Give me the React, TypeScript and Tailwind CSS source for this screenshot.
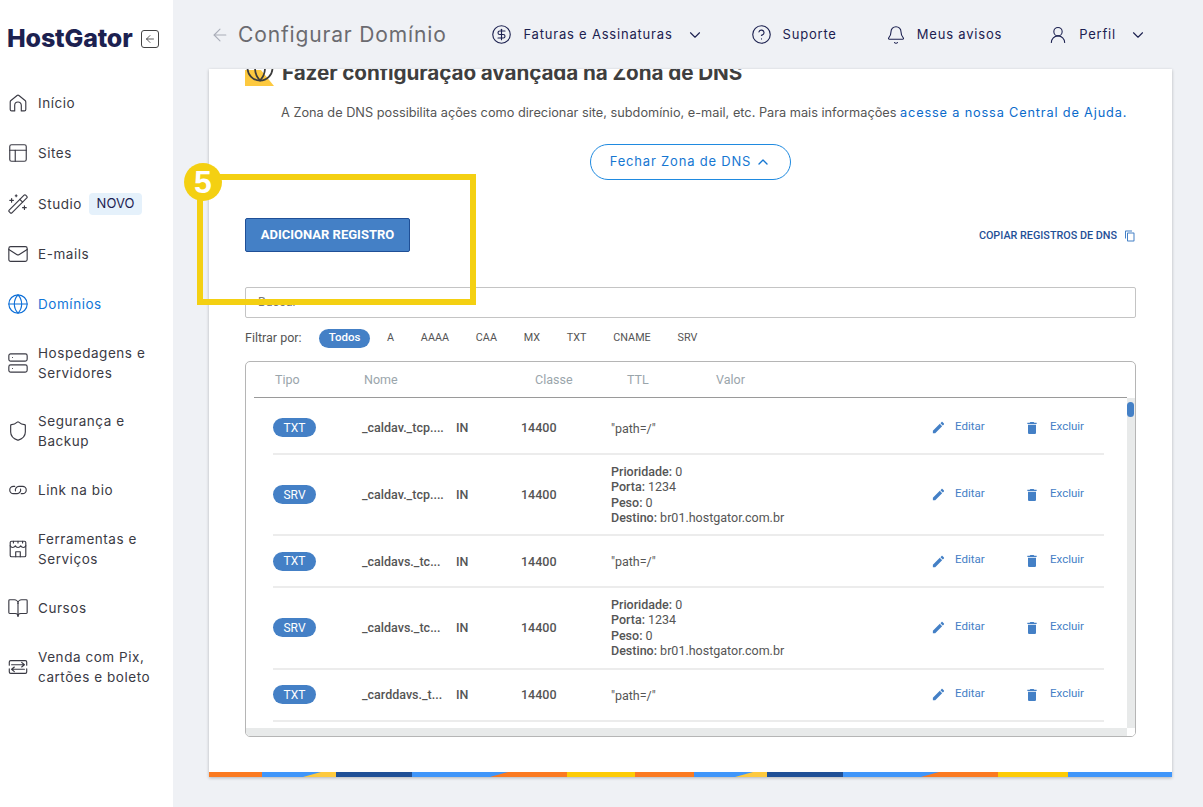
import type { ReactNode } from 'react';
import {
  ArrowLeft,
  Bell,
  BookOpen,
  ChevronDown,
  ChevronUp,
  CircleDollarSign,
  CircleHelp,
  Globe,
  Layout,
  Mail,
  Server,
  Shield,
  UserRound,
  WandSparkles,
} from 'lucide-react';

type IconProps = { size?: number; strokeWidth?: number; color?: string; className?: string };

function Outline({ size, strokeWidth, color, className, children }: IconProps & { children: ReactNode }) {
  return (
    <svg
      width={size}
      height={size}
      viewBox="0 0 24 24"
      fill="none"
      stroke={color}
      strokeWidth={strokeWidth}
      strokeLinecap="round"
      strokeLinejoin="round"
      className={className}
    >
      {children}
    </svg>
  );
}

function HouseIcon(props: IconProps) {
  return (
    <Outline {...props}>
      <path d="M3.500 19V10.800c0-.6.3-1.200.8-1.600L11 3.800c.6-.4 1.400-.4 2 0l6.700 5.400c.5.4.8 1 .8 1.600V19c0 1-.7 1.600-1.600 1.600h-3.300V14.500a3.600 3.600 0 0 0-7.200 0v6.100H5.100C4.200 20.600 3.500 20 3.500 19z" />
    </Outline>
  );
}

function ChainIcon(props: IconProps) {
  return (
    <Outline {...props}>
      <path d="M8.500 8H7a4 4 0 0 0 0 8h4a4 4 0 0 0 3.800-5" />
      <path d="M15.500 16H17a4 4 0 0 0 0-8h-4a4 4 0 0 0-3.800 5" />
    </Outline>
  );
}

function ShopIcon(props: IconProps) {
  return (
    <Outline {...props}>
      <rect x="3.500" y="3.500" width="17" height="17" rx="1.500" />
      <path d="M3.500 8.500c1 2.500 4.200 2.500 5.600 0 1 2.500 4.800 2.500 5.800 0 1.400 2.500 4.600 2.500 5.600 0" />
      <path d="M9.500 20.500V15h5v5.500" />
      <path d="M7 3.500v2M12 3.500v2M17 3.500v2" />
    </Outline>
  );
}

function PixIcon(props: IconProps) {
  return (
    <Outline {...props}>
      <path d="M2.500 10V6.500c0-.8.7-1.500 1.500-1.500h16c.8 0 1.500.7 1.500 1.500V10" />
      <path d="M2.500 14v3.500c0 .8.700 1.500 1.500 1.500h16c.8 0 1.500-.7 1.500-1.500V14" />
      <path d="M5 9.500h14M16 7l3 2.500L16 12" />
      <path d="M19 14.500H5M8 12l-3 2.500L8 17" />
    </Outline>
  );
}

const navItems = [
  { label: ['Início'], icon: HouseIcon, h: 'h-[50px]' },
  { label: ['Sites'], icon: Layout, h: 'h-[50px]' },
  { label: ['Studio'], icon: WandSparkles, h: 'h-[51px]', badge: true },
  { label: ['E-mails'], icon: Mail, h: 'h-[50px]' },
  { label: ['Domínios'], icon: Globe, h: 'h-[50px]', active: true },
  { label: ['Hospedagens e', 'Servidores'], icon: Server, h: 'h-[68px]' },
  { label: ['Segurança e', 'Backup'], icon: Shield, h: 'h-[68px]' },
  { label: ['Link na bio'], icon: ChainIcon, h: 'h-[50px]' },
  { label: ['Ferramentas e', 'Serviços'], icon: ShopIcon, h: 'h-[68px]' },
  { label: ['Cursos'], icon: BookOpen, h: 'h-[50px]' },
  { label: ['Venda com Pix,', 'cartões e boleto'], icon: PixIcon, h: 'h-[68px]' },
];

const srv = ['Prioridade: 0', 'Porta: 1234', 'Peso: 0', 'Destino: br01.hostgator.com.br'];

const rows = [
  { type: 'TXT', name: '_caldav._tcp....', h: 'h-[57px] pt-[4px]' },
  { type: 'SRV', name: '_caldav._tcp....', h: 'h-[81px]', srv: true },
  { type: 'TXT', name: '_caldavs._tc...', h: 'h-[52px]' },
  { type: 'SRV', name: '_caldavs._tc...', h: 'h-[82px] pb-[1px]', srv: true },
  { type: 'TXT', name: '_carddavs._t...', h: 'h-[52px] pb-[1px]' },
];

const filters = ['A', 'AAAA', 'CAA', 'MX', 'TXT', 'CNAME', 'SRV'];

function TopItem({ icon, children }: { icon: ReactNode; children: ReactNode }) {
  return (
    <div className="flex items-center gap-[11px] text-[13px] tracking-[0.8px] text-[#1c2150]">
      {icon}
      <span>{children}</span>
    </div>
  );
}

function Sidebar() {
  return (
    <aside className="w-[173px] shrink-0 bg-white">
      <div className="flex h-[78px] items-center pl-[7px]">
        <span className="text-[25px] font-extrabold tracking-[-0.15px] text-[#1c2150]">HostGator</span>
        <span className="ml-[8px] flex h-[18px] w-[18px] items-center justify-center rounded-[3px] border border-[#444]">
          <ArrowLeft size={12} strokeWidth={1.6} color="#333" />
        </span>
      </div>
      <nav className="pl-[7px]">
        {navItems.map((item) => {
          const Icon = item.icon;
          return (
            <div key={item.label[0]} className={`flex items-center gap-[9px] ${item.h}`}>
              <Icon size={22} strokeWidth={1.25} color={item.active ? '#0d6fd8' : '#3a3a44'} className="shrink-0" />
              <div className={`text-[13.5px] leading-[20px] tracking-[0.55px] ${item.active ? 'text-[#1276d8]' : 'text-[#3a3a44]'}`}>
                {item.label.map((l) => (
                  <div key={l} className="whitespace-nowrap">{l}</div>
                ))}
              </div>
              {item.badge && (
                <span className="-ml-[2px] flex h-[22px] w-[53px] items-center justify-center rounded-[4px] bg-[#e5f1fb] text-[13px] text-[#1c2150]">NOVO</span>
              )}
            </div>
          );
        })}
      </nav>
    </aside>
  );
}

function Header() {
  return (
    <header className="flex h-[69px] shrink-0 items-center pl-[37px] pr-[56px]">
      <ArrowLeft size={20} strokeWidth={1.3} color="#a9adb8" />
      <h1 className="ml-[8px] text-[21px] tracking-[0.85px] text-[#6b6b70]">Configurar Domínio</h1>
      <div className="ml-auto flex items-center">
        <TopItem icon={<CircleDollarSign size={21} strokeWidth={1.3} />}>Faturas e Assinaturas</TopItem>
        <ChevronDown size={18} strokeWidth={1.5} color="#1c2150" className="ml-[13px]" />
        <div className="ml-[47px]">
          <TopItem icon={<CircleHelp size={21} strokeWidth={1.3} />}>Suporte</TopItem>
        </div>
        <div className="ml-[49px]">
          <TopItem icon={<Bell size={20} strokeWidth={1.3} />}>Meus avisos</TopItem>
        </div>
        <div className="ml-[46px]">
          <TopItem icon={<UserRound size={20} strokeWidth={1.3} />}>Perfil</TopItem>
        </div>
        <ChevronDown size={18} strokeWidth={1.5} color="#1c2150" className="ml-[13px]" />
      </div>
    </header>
  );
}

function TableRow({ row }: { row: (typeof rows)[number] }) {
  return (
    <div className={`flex items-center border-b-2 border-[#ececec] font-['Roboto',sans-serif] text-[12.5px] font-medium text-[#555] ${row.h}`}>
      <span className="flex h-[19px] w-[43px] items-center justify-center rounded-full bg-[#4480c6] text-[12px] font-normal text-white">
        {row.type}
      </span>
      <span className="ml-[46px] w-[94px] translate-y-[1px] whitespace-nowrap">{row.name}</span>
      <span className="w-[65px] translate-y-[1px]">IN</span>
      <span className="w-[90px] translate-y-[1px]">14400</span>
      <div className="w-[320px] font-normal leading-[15.3px]">
        {row.srv ? (
          srv.map((line) => {
            const [k, v] = line.split(': ');
            return (
              <div key={line}>
                <span className="font-medium">{k}:</span> {v}
              </div>
            );
          })
        ) : (
          <span className="inline-block translate-y-[1px] font-normal">"path=/"</span>
        )}
      </div>
      <svg width="15" height="15" viewBox="0 0 24 24" fill="#4480c6">
        <path d="M3 17.25V21h3.75L17.81 9.94l-3.75-3.75L3 17.25zM20.71 7.04c.39-.39.39-1.02 0-1.41l-2.34-2.34c-.39-.39-1.02-.39-1.41 0l-1.83 1.83 3.75 3.75 1.83-1.83z" />
      </svg>
      <span className="ml-[9px] w-[69px] -translate-y-[1px] text-[11.5px] font-normal text-[#4480c6]">Editar</span>
      <svg width="16" height="16" viewBox="0 0 24 24" fill="#4480c6">
        <path d="M6 19c0 1.1.9 2 2 2h8c1.1 0 2-.9 2-2V7H6v12zM19 4h-3.5l-1-1h-5l-1 1H5v2h14V4z" />
      </svg>
      <span className="ml-[10px] -translate-y-[1px] text-[11.5px] font-normal text-[#4480c6]">Excluir</span>
    </div>
  );
}

function DnsTable() {
  return (
    <div className="mt-[13px] h-[376px] overflow-hidden rounded-[5px] border border-[#b5b5b5] font-['Roboto',sans-serif]">
      <div className="mx-[8px] flex h-[36px] items-center border-b border-[#9a9a9a] pl-[21px] pt-[2px] text-[12.5px] text-[#9aa5ab]">
        <span className="w-[89px]">Tipo</span>
        <span className="w-[171px]">Nome</span>
        <span className="w-[92px]">Classe</span>
        <span className="w-[89px]">TTL</span>
        <span>Valor</span>
      </div>
      <div className="flex h-[330px]">
        <div className="flex-1 overflow-hidden pl-[27px] pr-[23px]">
          {rows.map((row, i) => (
            <TableRow key={i} row={row} />
          ))}
        </div>
        <div className="relative w-[8px] shrink-0 bg-[#e8eaea]">
          <div className="absolute left-0 top-[4px] h-[15px] w-[7px] rounded-full bg-[#4480c6]" />
        </div>
      </div>
      <div className="flex h-[8px]">
        <div className="flex-1 bg-[#e8eaea]" />
        <div className="w-[8px] bg-white" />
      </div>
    </div>
  );
}

function Stripe() {
  return (
    <svg className="block h-[5px] w-full shrink-0" viewBox="0 0 963 5" preserveAspectRatio="none">
      <rect width="963" height="5" fill="#4096fa" />
      <rect width="53" height="5" fill="#fb7a20" />
      <polygon points="94,5 112,0 127,0 127,5" fill="#fdc93f" />
      <rect x="127" width="76" height="5" fill="#1f5097" />
      <polygon points="281,5 299,0 358,0 358,5" fill="#fb7a20" />
      <rect x="358" width="68" height="5" fill="#fdcb06" />
      <rect x="426" width="59" height="5" fill="#fb7a20" />
      <polygon points="526,5 544,0 558,0 558,5" fill="#fdc93f" />
      <rect x="558" width="76" height="5" fill="#1f5097" />
      <polygon points="712,5 730,0 789,0 789,5" fill="#fb7a20" />
      <rect x="789" width="70" height="5" fill="#fdcb06" />
    </svg>
  );
}

function Card() {
  return (
    <section className="flex h-[708px] flex-col overflow-hidden bg-white shadow-[0_1px_3px_rgba(0,0,0,0.25)]">
      <div className="h-[703px] flex-1 px-[36px]">
        <div className="-mt-[10px] flex h-[27px] items-center">
          <div className="relative mr-[8px] h-[27px] w-[29px]">
            <div className="absolute bottom-0 left-0 h-[16px] w-[29px] bg-[#fdc93f] [clip-path:polygon(0_0,55%_0,100%_100%,0_100%)]" />
            <Globe size={30} strokeWidth={1.4} color="#3d3d3d" className="absolute left-[0px] top-[-6px]" />
          </div>
          <h2 className="whitespace-nowrap text-[20.7px] font-bold tracking-[-0.1px] text-[#3f3f3f]">Fazer configuração avançada na Zona de DNS</h2>
        </div>
        <p className="mt-[17px] whitespace-nowrap pl-[36px] text-[12.75px] leading-[20px] text-[#555]">
          A Zona de DNS possibilita ações como direcionar site, subdomínio, e-mail, etc. Para mais informações{' '}
          <span className="tracking-[0.83px] text-[#0b6bcb]">acesse a nossa Central de Ajuda</span>
          <span className="text-[#0b6bcb]">.</span>
        </p>
        <div className="mt-[21px] flex justify-center">
          <button className="flex h-[36px] w-[201px] items-center justify-center gap-[4px] rounded-full border border-[#1f8ae0] text-[13px] tracking-[0.8px] text-[#1677d2]">
            Fechar Zona de DNS
            <ChevronUp size={16} strokeWidth={2} />
          </button>
        </div>
        <div className="mt-[38px] flex items-center justify-between font-['Roboto',sans-serif]">
          <button className="h-[34px] w-[165px] rounded-[2px] border border-[#1f4f96] bg-[#4480c6] text-[13px] font-bold text-white">
            ADICIONAR REGISTRO
          </button>
          <div className="flex translate-y-[1px] items-center gap-[7px] text-[10.8px] font-medium text-[#1f5097]">
            COPIAR REGISTROS DE DNS
            <svg width="12" height="12" viewBox="0 0 24 24" fill="#4480c6">
              <path d="M16 1H4c-1.1 0-2 .9-2 2v14h2V3h12V1zm3 4H8c-1.1 0-2 .9-2 2v14c0 1.1.9 2 2 2h11c1.1 0 2-.9 2-2V7c0-1.1-.9-2-2-2zm0 16H8V7h11v14z" />
            </svg>
          </div>
        </div>
        <div className="mt-[35px] flex h-[31px] items-center rounded-[2px] border border-[#c4c4c4] pl-[12px] font-['Roboto',sans-serif] text-[12.5px] text-[#777]">
          Buscar
        </div>
        <div className="mt-[10px] flex h-[20px] items-center font-['Roboto',sans-serif] text-[12.5px] text-[#555]">
          <span className="w-[74px]">Filtrar por:</span>
          <span className="flex h-[19px] w-[51px] items-center justify-center rounded-full bg-[#4480c6] text-[11.5px] font-medium text-white">Todos</span>
          <div className="ml-[17px] flex items-center gap-[26.8px] text-[10.8px] text-[#555]">
            {filters.map((f) => (
              <span key={f}>{f}</span>
            ))}
          </div>
        </div>
        <DnsTable />
      </div>
      <Stripe />
    </section>
  );
}

export default function App() {
  return (
    <div className="relative flex h-[807px] w-[1203px] overflow-hidden bg-[#eff1f5] font-['Inter',sans-serif]">
      <Sidebar />
      <main className="flex min-w-0 flex-1 flex-col">
        <Header />
        <div className="ml-[36px] mr-[31px]">
          <Card />
        </div>
      </main>

      {/* marcacao amarela do tutorial */}
      <div className="absolute left-[197px] top-[174px] h-[131px] w-[279px] border-[6px] border-[#f4d012]" />
      <div className="absolute left-[184px] top-[163px] flex h-[38px] w-[38px] items-center justify-center rounded-full bg-[#f4d012] font-['Liberation_Sans',sans-serif] text-[32px] font-bold text-white">
        5
      </div>
    </div>
  );
}
